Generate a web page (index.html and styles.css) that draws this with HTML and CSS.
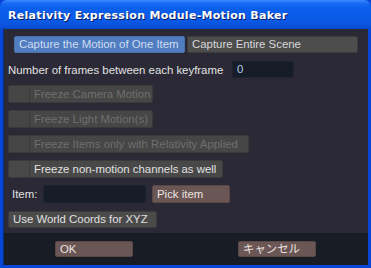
FILE: index.html
```html
<!DOCTYPE html>
<html>
<head>
<meta charset="utf-8">
<link rel="stylesheet" href="styles.css">
</head>
<body>
<div class="window">
  <div class="titlebar"><span class="title">Relativity Expression Module-Motion Baker</span></div>
  <div class="frame">
    <div class="content">
      <div class="tabs">
        <div class="tab tab-active">Capture the Motion of One Item</div>
        <div class="tab">Capture Entire Scene</div>
      </div>
      <div class="row frames-row">
        <span class="label">Number of frames between each keyframe</span>
        <div class="input input-frames">0</div>
      </div>
      <div class="row">
        <div class="check disabled w-camera"><span class="box"></span><span class="check-label">Freeze Camera Motion</span></div>
      </div>
      <div class="row">
        <div class="check disabled w-camera"><span class="box"></span><span class="check-label">Freeze Light Motion(s)</span></div>
      </div>
      <div class="row">
        <div class="check disabled w-items"><span class="box"></span><span class="check-label">Freeze Items only with Relativity Applied</span></div>
      </div>
      <div class="row">
        <div class="check w-nonmotion"><span class="box"></span><span class="check-label">Freeze non-motion channels as well</span></div>
      </div>
      <div class="row item-row">
        <span class="label item-label">Item:</span>
        <div class="input input-item"></div>
        <div class="btn btn-brown btn-pick">Pick item</div>
      </div>
      <div class="row">
        <div class="btn btn-grey btn-world">Use World Coords for XYZ</div>
      </div>
    </div>
    <div class="footer">
      <div class="btn btn-brown btn-foot">OK</div>
      <div class="btn btn-brown btn-foot">キャンセル</div>
    </div>
  </div>
</div>
</body>
</html>
```

FILE: styles.css
```css
* { box-sizing: border-box; }
html, body { margin: 0; padding: 0; background: #0a46d6; }
body {
  width: 371px;
  height: 268px;
  overflow: hidden;
  font-family: "Liberation Sans", "Noto Sans CJK JP", sans-serif;
  font-size: 11.4px;
}
.window {
  width: 371px;
  height: 268px;
  display: flex;
  flex-direction: column;
  background: #0846d8;
  border-radius: 7px 7px 0 0;
  overflow: hidden;
}
.titlebar {
  height: 29px;
  flex: none;
  background: linear-gradient(to bottom, #3d8bff 0px, #1a6cf4 3px, #0b5fea 8px, #0a5ae6 20px, #0a52dc 26px, #0848cc 29px);
  display: flex;
  align-items: center;
  padding-left: 8px;
  padding-top: 1px;
}
.title {
  color: #ffffff;
  font-family: "DejaVu Sans", sans-serif;
  font-weight: bold;
  font-size: 11px;
  letter-spacing: 0.3px;
  text-shadow: 1px 1px 0 #0a1a60;
}
.frame {
  flex: 1;
  margin: 0 3px 3px 3px;
  display: flex;
  flex-direction: column;
  border-left: 1px solid #0a2a80;
}
.content {
  flex: 1;
  background: #2a2935;
  padding: 7px 5px 0 4px;
  display: flex;
  flex-direction: column;
  gap: 7px;
}
.tabs {
  display: flex;
  margin-left: 6px;
  gap: 2px;
  height: 17px;
}
.tab {
  width: 171px;
  height: 17px;
  line-height: 15px;
  padding-left: 4px;
  color: #d8d8d8;
  background: #4d4d4d;
  border: 1px solid #3c3c3c;
  border-radius: 2px;
  white-space: nowrap;
}
.tab-active {
  background: #4f7dc0;
  color: #cfdcf2;
  border-color: #4a70aa;
}
.row {
  display: flex;
  align-items: center;
  height: 18px;
}
.frames-row { margin-top: 1px; height: 17px; }
.label {
  color: #e2e2e2;
  white-space: nowrap;
}
.frames-row .label { width: 224px; }
.input {
  background: #161d28;
  border: 1px solid #1d2430;
  border-radius: 2px;
  height: 17px;
  color: #b8cbee;
  line-height: 15px;
  padding-left: 4px;
}
.input-frames { width: 62px; }
.check {
  display: flex;
  height: 18px;
  background: #484848;
  border: 1px solid #3a3a3a;
  border-radius: 2px;
  color: #e0e0e0;
}
.check .box {
  width: 21px;
  border-right: 1px solid #3a3a3a;
}
.check-label {
  padding-left: 4px;
  line-height: 16px;
  white-space: nowrap;
}
.check.disabled { color: #6f6f6f; background: #464646; }
.w-camera { width: 145px; }
.w-items { width: 241px; }
.w-nonmotion { width: 215px; }
.item-label { width: 35px; padding-left: 4px; }
.input-item { width: 103px; height: 18px; }
.btn {
  height: 18px;
  line-height: 16px;
  padding-left: 4px;
  border-radius: 2px;
  white-space: nowrap;
}
.btn-brown {
  background: #6a5654;
  border: 1px solid #5a4846;
  color: #ece4e2;
}
.btn-pick { width: 78px; margin-left: 6px; }
.btn-grey {
  background: #4b4b4b;
  border: 1px solid #3a3a3a;
  color: #e0e0e0;
}
.btn-world { width: 149px; height: 17px; line-height: 15px; margin-top: 1px; }
.footer {
  height: 32px;
  flex: none;
  background: #181c25;
  display: flex;
  align-items: center;
  padding-left: 51px;
  gap: 105px;
}
.btn-foot { width: 78px; height: 16px; line-height: 14px; }
```
